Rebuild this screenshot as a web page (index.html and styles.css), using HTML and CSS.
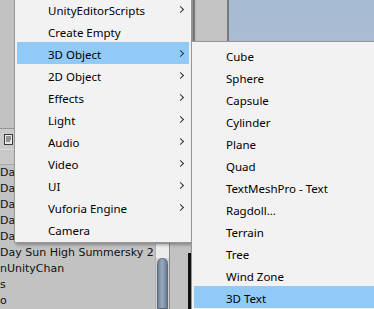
FILE: index.html
```html
<!DOCTYPE html>
<html lang="en">
<head>
    <meta charset="UTF-8">
    <title>GameObject menu - 3D Object</title>
    <link rel="stylesheet" href="styles.css">
</head>
<body>

<div class="editor">
    <div class="hierarchy">
        <div class="hier-top"></div>
        <div class="hier-toolbar">
            <svg class="doc-icon" width="9" height="11" viewBox="0 0 9 11">
                <rect x="0.5" y="0.5" width="8" height="10" fill="#e8e8e8" stroke="#3c3c3c"/>
                <line x1="2" y1="3" x2="7" y2="3" stroke="#3c3c3c"/>
                <line x1="2" y1="5" x2="7" y2="5" stroke="#3c3c3c"/>
                <line x1="2" y1="7" x2="6" y2="7" stroke="#3c3c3c"/>
            </svg>
        </div>
        <div class="hier-header"></div>
        <ul class="hier-list">
            <li>Da</li>
            <li>Da</li>
            <li>Da</li>
            <li>Da</li>
            <li>Da</li>
            <li>Day Sun High Summersky 2</li>
            <li>nUnityChan</li>
            <li>s</li>
            <li>o</li>
        </ul>
    </div>
    <div class="scrollbar">
        <div class="scroll-cap"></div>
        <div class="scroll-thumb"></div>
    </div>
    <div class="gap-col">
        <div class="gap-top"></div>
        <div class="black-strip"></div>
    </div>
    <div class="side-col"></div>
    <div class="scene-col"></div>
</div>

<div class="menu main-menu">
    <div class="item sub">UnityEditorScripts</div>
    <div class="item">Create Empty</div>
    <div class="item sub active">3D Object</div>
    <div class="item sub">2D Object</div>
    <div class="item sub">Effects</div>
    <div class="item sub">Light</div>
    <div class="item sub">Audio</div>
    <div class="item sub">Video</div>
    <div class="item sub">UI</div>
    <div class="item sub">Vuforia Engine</div>
    <div class="item">Camera</div>
</div>

<div class="menu sub-menu">
    <div class="item">Cube</div>
    <div class="item">Sphere</div>
    <div class="item">Capsule</div>
    <div class="item">Cylinder</div>
    <div class="item">Plane</div>
    <div class="item">Quad</div>
    <div class="item">TextMeshPro - Text</div>
    <div class="item">Ragdoll...</div>
    <div class="item">Terrain</div>
    <div class="item">Tree</div>
    <div class="item">Wind Zone</div>
    <div class="item active">3D Text</div>
</div>

</body>
</html>
```

FILE: styles.css
```css
body {
    margin: 0;
    padding: 0;
    width: 374px;
    height: 309px;
    overflow: hidden;
    position: relative;
    background-color: #c2c2c2;
}
.editor {
    display: flex;
    height: 309px;
}
.hierarchy {
    width: 155px;
    display: flex;
    flex-direction: column;
    background-color: #c2c2c2;
}
.hier-top {
    height: 130px;
}
.hier-toolbar {
    height: 20px;
    border-top: 1px solid #999999;
    background-color: #cbcbcb;
    display: flex;
    align-items: center;
    padding-left: 4px;
}
.hier-header {
    height: 14px;
    border-top: 1px solid #dedede;
    border-bottom: 1px solid #a8a8a8;
    background-color: #c8c8c8;
}
.hier-list {
    list-style: none;
    margin: 0;
    padding: 0;
    font-family: "DejaVu Sans", sans-serif;
    font-size: 11px;
    color: #111111;
    white-space: nowrap;
}
.hier-list li {
    height: 16px;
    line-height: 16px;
}
.scrollbar {
    width: 13px;
    margin-top: 244px;
    display: flex;
    flex-direction: column;
    background-color: #d2d2d2;
    border-left: 1px solid #b0b0b0;
}
.scroll-cap {
    height: 14px;
    background-color: #ececec;
}
.scroll-thumb {
    flex: 1;
    margin: 0 1px;
    border-radius: 6px 6px 0 0;
    border: 1px solid #58677a;
    background: linear-gradient(to right, #6d7f98, #9aaac0 45%, #6a7c95);
}
.gap-col {
    width: 23px;
    display: flex;
    flex-direction: column;
    align-items: flex-end;
    border-left: 1px solid #8a8a8a;
}
.gap-top {
    height: 253px;
}
.black-strip {
    flex: 1;
    width: 5px;
    background-color: #111111;
}
.side-col {
    width: 32px;
    background-color: #c4c4c4;
    border-left: 2px solid #8e8e8e;
    border-right: 2px solid #7a7a7a;
}
.scene-col {
    flex: 1;
    background: linear-gradient(to bottom, #a7bbd2, #b3c3d6);
}

.menu {
    position: absolute;
    background-color: #f2f2f2;
    border: 1px solid #979797;
    padding: 2px;
    box-shadow: 2px 2px 3px rgba(0, 0, 0, 0.3);
    font-family: "Noto Sans", sans-serif;
    font-size: 11.5px;
    color: #000000;
}
.main-menu {
    left: 14px;
    top: -5px;
    width: 172px;
}
.sub-menu {
    left: 191px;
    top: 41px;
    width: 200px;
}
.item {
    height: 20px;
    padding-top: 2px;
    line-height: 22px;
    padding-left: 31px;
    position: relative;
    white-space: nowrap;
}
.sub-menu .item {
    padding-left: 32px;
}
.item.active {
    background-color: #91c9f7;
}
.item.sub::after {
    content: "";
    position: absolute;
    right: 6px;
    top: 9px;
    width: 4px;
    height: 4px;
    border-right: 1px solid #333333;
    border-top: 1px solid #333333;
    transform: rotate(45deg);
}
```
